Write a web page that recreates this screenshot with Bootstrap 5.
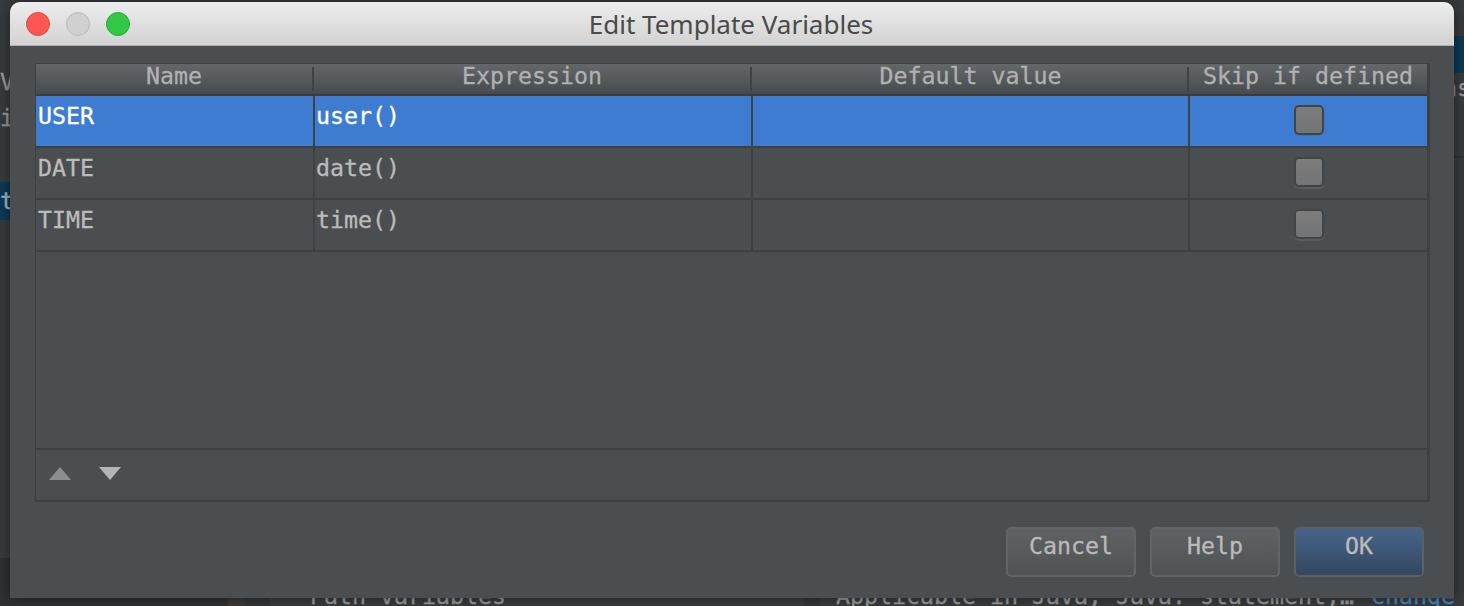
<!DOCTYPE html>
<html lang="en">
<head>
    <meta charset="UTF-8">
    <title>Edit Template Variables</title>
    <link href="https://cdn.jsdelivr.net/npm/bootstrap@5.3.3/dist/css/bootstrap.min.css" rel="stylesheet">
    <style>
        html, body { height: 606px; overflow: hidden; background: #333638; }
        body { font-family: "DejaVu Sans Mono", monospace; font-size: 23.25px; color: #bbbbbb; line-height: 1; -webkit-text-stroke: .3px; }

        /* the editor window behind the dialog */
        .ide { height: 606px; overflow: hidden; background: #393c3e; color: #9a9c9e; }
        .ide-top { height: 558px; }
        .ide-left { width: 10px; overflow: hidden; }
        .ide-left div { height: 38px; line-height: 38px; }
        .ide-left .ide-v { margin-top: 63px; height: 36px; }
        .ide-i { margin-bottom: 45px; }
        .ide-sel { background: #0d3a55; color: #a9b7c6; }
        .ide-right { width: 10px; overflow: hidden; padding-top: 36px; }
        .ide-right .ide-sel { height: 37px; }
        .ide-right .ide-ns { height: 32px; margin-left: -11px; line-height: 30px; white-space: nowrap; }
        .ide-right .ide-rule { margin-top: 51px; height: 2px; background: #2f3133; }
        .ide-bottom { padding-top: 26px; height: 48px; background: linear-gradient(90deg, #2f3133 228px, #3b3a38 228px, #3b3a38 245px, #333537 245px, #333537 270px, #393c3e 270px, #393c3e 804px, #333537 804px, #333537 820px, #393c3e 820px); }
        .ide-path { margin-left: 310px; width: 526px; }
        .ide-link { color: #4a88c7; margin-left: 17px; }

        /* dialog */
        .dlg { position: absolute; left: 10px; top: 2px; width: 1444px; height: 596px; background: #4b4e50;
               border-radius: 10px 10px 0 0; box-shadow: 0 0 14px rgba(0, 0, 0, .5); }
        .dlg-title { height: 44px; background: linear-gradient(#ededed, #d2d2d2); border-bottom: 1px solid #aeaeae;
                     border-radius: 10px 10px 0 0; padding-left: 16px; }
        .dlg-title span { font-family: "Noto Sans", sans-serif; font-size: 26px; color: #4a4a4a; flex: 1; text-align: center; margin-right: 122px; -webkit-text-stroke: 0; }
        .light { width: 24px; height: 24px; border-radius: 50%; border: 1px solid; }
        .light-red { background: #fc5753; border-color: #df4744; }
        .light-off { background: #d0d0d0; border-color: #b9b9b9; }
        .light-green { background: #33c748; border-color: #27aa35; }
        .dlg-lights { gap: 16px; }

        .var-box { margin: 17px 24px 0 25px; height: 439px; border: 2px solid #3f4040; border-left-width: 1px; border-right-width: 3px; border-top-width: 1px; }
        .var-table { width: 1391px; table-layout: fixed; border-collapse: collapse; color: #bbbbbb; }
        .var-table th { height: 31px; padding: 0 0 6px; font-weight: normal; text-align: center; color: #afb1b3;
                        background: linear-gradient(#646769, #484b4d); position: relative; border-bottom: 2px solid #3a3b3c; }
        .var-table th:nth-child(-n+2) { padding-right: 2px; }
        .var-table th + th::before { content: ""; position: absolute; left: -2px; top: 3px; bottom: 3px; width: 2px; background: #3f4142; }
        .var-table td { height: 52px; padding: 0 0 10px 2px; border-bottom: 2px solid #3f4040; border-right: 2px solid #3f4040; }
        .var-table td + td { padding-left: 1px; }
        .var-table td:last-child { border-right: 0; }
        .var-table tr.picked td { background: #3e7cd1; color: #ffffff; }
        .var-table td.skip { padding: 0 0 2px; }
        .var-check { display: block; width: 30px; height: 30px; margin: 0 auto; border-radius: 5px; background: linear-gradient(#7c7c7d, #737475);
                     border: 2px solid #434445; box-shadow: 0 2px 0 #5a5c5e; }
        .picked .var-check { box-shadow: 0 1px 0 #4a6fa5; }
        .var-list { height: 384px; }
        .var-tools { height: 52px; border-top: 2px solid #3f4040; padding: 0 0 4px 13px; gap: 28px; }

        .dlg-actions { gap: 14px; padding: 25px 30px 0 0; }
        .dlg-btn { width: 130px; height: 50px; padding: 0 0 12px; font-size: 23.25px; line-height: 1; color: #bbbbbb;
                   background: linear-gradient(#5f6264, #505354); border: 2px solid #626567; border-radius: 5px; }
        .dlg-btn-main { background: linear-gradient(#47648a, #33475f); border-color: #5b6064; }
    </style>
</head>
<body>
<div class="ide d-flex flex-column">
    <div class="ide-top d-flex justify-content-between">
        <div class="ide-left">
            <div class="ide-v">V</div>
            <div class="ide-i">i</div>
            <div class="ide-sel">t</div>
        </div>
        <div class="ide-right">
            <div class="ide-sel"></div>
            <div class="ide-ns">ns</div>
            <div class="ide-rule"></div>
        </div>
    </div>
    <div class="ide-bottom d-flex text-nowrap">
        <div class="ide-path">Path variables</div>
        <div>Applicable in Java; Java: statement;…<span class="ide-link">Change</span></div>
    </div>
</div>

<div class="dlg">
    <div class="dlg-title d-flex align-items-center">
        <div class="dlg-lights d-flex">
            <i class="light light-red"></i>
            <i class="light light-off"></i>
            <i class="light light-green"></i>
        </div>
        <span>Edit Template Variables</span>
    </div>
    <div class="var-box">
        <div class="var-list">
            <table class="var-table">
                <colgroup>
                    <col style="width: 278px">
                    <col style="width: 438px">
                    <col style="width: 437px">
                    <col style="width: 238px">
                </colgroup>
                <thead>
                    <tr><th>Name</th><th>Expression</th><th>Default value</th><th>Skip if defined</th></tr>
                </thead>
                <tbody>
                    <tr class="picked"><td>USER</td><td>user()</td><td></td><td class="skip"><i class="var-check"></i></td></tr>
                    <tr><td>DATE</td><td>date()</td><td></td><td class="skip"><i class="var-check"></i></td></tr>
                    <tr><td>TIME</td><td>time()</td><td></td><td class="skip"><i class="var-check"></i></td></tr>
                </tbody>
            </table>
        </div>
        <div class="var-tools d-flex align-items-center">
            <svg width="22" height="13" viewBox="0 0 22 13"><polygon points="11,0 22,13 0,13" fill="#8b8d8e"/></svg>
            <svg width="22" height="13" viewBox="0 0 22 13"><polygon points="0,0 22,0 11,13" fill="#b4b5b6"/></svg>
        </div>
    </div>
    <div class="dlg-actions d-flex justify-content-end">
        <button type="button" class="btn dlg-btn">Cancel</button>
        <button type="button" class="btn dlg-btn">Help</button>
        <button type="button" class="btn dlg-btn dlg-btn-main">OK</button>
    </div>
</div>
<script src="https://cdn.jsdelivr.net/npm/bootstrap@5.3.3/dist/js/bootstrap.bundle.min.js"></script>
</body>
</html>
